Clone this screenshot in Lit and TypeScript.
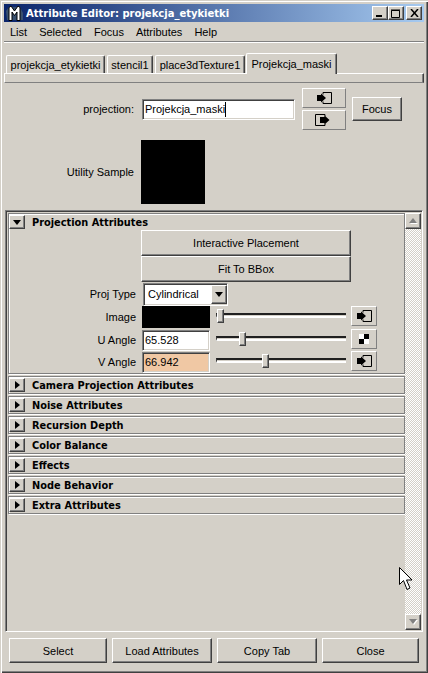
import { LitElement, html, css, svg } from "lit";
import { customElement } from "lit/decorators.js";

const inIcon = svg`<svg class="ico" width="15" height="12" viewBox="0 0 15 12"><path d="M6 .5H14.500V11.500H6V9.500M6 .5V2.500" fill="none" stroke="#000"/><path d="M0 3H4V1.500L9 6L4 10.500V9H0Z" fill="#000"/></svg>`;
const outIcon = svg`<svg class="ico" width="18" height="12" viewBox="0 0 18 12"><path d="M10 .5H.5V11.500H10V9.500M10 .5V2.500" fill="none" stroke="#000"/><path d="M5 3H9.500V1.500L14.500 6L9.500 10.500V9H5Z" fill="#000"/></svg>`;
const checker = svg`<svg class="ico" width="10" height="10" viewBox="0 0 10 10"><rect width="10" height="10" fill="#fff"/><path d="M5 0H10V5H5ZM0 5H5V10H0Z" fill="#000"/></svg>`;
const logo = svg`<svg width="17" height="17" viewBox="0 0 17 17"><path d="M0 6L3 2H14L17 8V15H1Z" fill="#39506e"/><path d="M3 15.500V2.500L5 1L8.500 6L12 1L14 2.500V15.500H11V7L8.500 10.500L6 7V15.500Z" fill="#fff" stroke="#000"/></svg>`;
const triDown = svg`<svg width="8" height="5" viewBox="0 0 8 5"><path d="M0 0H8L4 5Z" fill="#000"/></svg>`;
const triRight = svg`<svg width="5" height="8" viewBox="0 0 5 8"><path d="M0 0L5 4L0 8Z" fill="#000"/></svg>`;

@customElement("app-root")
export class AppRoot extends LitElement {
  static styles = css`
    :host { display: block; width: 428px; height: 673px; font-family: "Liberation Sans", Arial, sans-serif; font-size: 11px; color: #000; }
    * { box-sizing: border-box; }
    .window { position: relative; width: 428px; height: 673px; background: #d4d0c8; padding: 4px 4px 2px; display: flex; flex-direction: column;
      box-shadow: inset 1px 1px 0 #d4d0c8, inset 2px 2px 0 #fff, inset -1px -1px 0 #404040, inset -2px -2px 0 #808080; }
    .title { height: 18px; flex: none; display: flex; align-items: center; background: linear-gradient(90deg, #0a246a, #a6caf0); padding: 0 2px; color: #fff; font: bold 10px "DejaVu Sans", sans-serif; }
    .logo { width: 17px; height: 17px; margin-right: 3px; flex: none; }
    .caption { flex: 1; white-space: nowrap; }
    .caps { display: flex; }
    .cap { width: 16px; height: 14px; background: #d4d0c8; border: 1px solid; border-color: #fff #404040 #404040 #fff; box-shadow: inset -1px -1px 0 #808080; display: flex; align-items: center; justify-content: center; }
    .cap.x { margin-left: 2px; }
    .menu { height: 19px; flex: none; display: flex; align-items: center; gap: 12px; padding: 0 6px; }
    .sep { height: 2px; flex: none; border-top: 1px solid #808080; border-bottom: 1px solid #fff; margin-bottom: 10px; }
    .tabs { height: 20px; flex: none; display: flex; align-items: flex-end; padding-left: 2px; gap: 2px; position: relative; z-index: 1; }
    .tab { height: 18px; padding: 1px 0 0; display: flex; align-items: center; justify-content: center; border: 1px solid; border-color: #fff #404040 transparent #fff; border-bottom: 0; border-radius: 2px 2px 0 0; box-shadow: inset -1px 0 0 #808080; }
    .tab.on { height: 21px; margin-bottom: -1px; background: #d4d0c8; margin-left: -1px; padding-bottom: 2px; }
    .strip { height: 10px; flex: none; border: 1px solid; border-color: #fff #404040 #404040 #fff; border-bottom-color: #808080; box-shadow: inset -1px 0 0 #808080; margin-bottom: 4px; }
    .top { height: 123px; flex: none; display: flex; flex-direction: column; gap: 9px; }
    .lab { text-align: right; white-space: nowrap; }
    .proj { display: flex; align-items: center; height: 44px; }
    .proj .lab { width: 130px; }
    .field { background: #fff; border: 1px solid; border-color: #808080 #fff #fff #808080; box-shadow: inset 1px 1px 0 #404040, inset -1px -1px 0 #d4d0c8; padding: 0 2px; height: 21px; display: flex; align-items: center; white-space: nowrap; }
    .nodename { width: 153px; margin-left: 8px; }
    .caret { display: inline-block; width: 1px; height: 15px; background: #000; }
    .stack { display: flex; flex-direction: column; gap: 2px; margin-left: 7px; }
    .btn { background: #d4d0c8; border: 1px solid; border-color: #fff #404040 #404040 #fff; box-shadow: inset -1px -1px 0 #808080; display: flex; align-items: center; justify-content: center; white-space: nowrap; padding: 0; }
    .stack .btn { width: 44px; height: 20px; border-color: #fff #808080 #808080 #fff; box-shadow: none; }
    .focus { width: 50px; height: 24px; margin-left: 6px; }
    .util { display: flex; align-items: center; height: 64px; }
    .util .lab { width: 130px; }
    .swatch { width: 64px; height: 64px; background: #000; margin-left: 7px; }
    .frame { flex: 1; display: flex; border: 1px solid; border-color: #808080 #fff #fff #808080; box-shadow: inset 1px 1px 0 #404040; margin: 0 1px 6px 1px; padding: 2px 1px 0 2px; min-height: 0; }
    .sections { width: 397px; flex: none; display: flex; flex-direction: column; gap: 2px; }
    .sec { border: 1px solid #808080; box-shadow: 1px 1px 0 #fff, inset 1px 1px 0 #fff; }
    .head { height: 16px; display: flex; align-items: center; font: bold 9.800px "DejaVu Sans", sans-serif; white-space: nowrap; }
    .tri { width: 16px; height: 14px; margin-right: 7px; flex: none; }
    .sec.open { height: 161px; }
    .acts { margin-left: 132px; width: 210px; display: flex; flex-direction: column; }
    .acts .btn { height: 26px; }
    .row { display: flex; align-items: center; height: 22px; }
    .row .lab { width: 127px; }
    .row.ddrow { height: 24px; }
    .row.first { height: 23px; padding-top: 1px; }
    .dd { margin-left: 7px; width: 85px; height: 23px; padding: 0 0 0 4px; justify-content: space-between; }
    .dd .btn { width: 16px; height: 19px; }
    .sw { width: 68px; height: 22px; background: #000; margin-left: 6px; flex: none; }
    .num { width: 68px; height: 21px; margin-left: 6px; padding: 0 2px; flex: none; }
    .num.key { background: #f0c8a4; }
    .slider { position: relative; width: 130px; height: 5px; margin: 0 0 3px 6px; border-top: 2px solid #202020; border-left: 1px solid #404040; border-bottom: 2px solid #fff; flex: none; }
    .thumb { position: absolute; top: -6px; width: 7px; height: 14px; background: #d4d0c8; border: 1px solid; border-color: #fff #404040 #404040 #fff; box-shadow: inset -1px -1px 0 #808080; }
    .link { width: 26px; height: 20px; margin: 0 0 3px 5px; border-color: #fff #808080 #808080 #fff; box-shadow: none; flex: none; }
    .rbar { width: 16px; flex: none; display: flex; flex-direction: column;
      background-color: #fff; background-image: linear-gradient(45deg, #d4d0c8 25%, transparent 25%, transparent 75%, #d4d0c8 75%), linear-gradient(45deg, #d4d0c8 25%, transparent 25%, transparent 75%, #d4d0c8 75%); background-size: 2px 2px; background-position: 0 0, 1px 1px; justify-content: space-between; margin-bottom: 1px; }
    .rbar .btn { height: 16px; }
    .bottom { height: 25px; flex: none; display: grid; grid-template-columns: 98px 100px 100px 97px; justify-content: space-between; margin: 0 5px 8px; }
    .cursor { position: absolute; left: 399px; top: 567px; }
  `;

  render() {
    const closed = ["Camera Projection Attributes", "Noise Attributes", "Recursion Depth", "Color Balance", "Effects", "Node Behavior", "Extra Attributes"];
    return html`
      <div class="window">
        <div class="title">
          <span class="logo">${logo}</span>
          <span class="caption">Attribute Editor: projekcja_etykietki</span>
          <span class="caps">
            <span class="cap">${svg`<svg width="10" height="8" viewBox="0 0 10 8"><path d="M1 6H7V8H1Z" fill="#000"/></svg>`}</span>
            <span class="cap">${svg`<svg width="10" height="9" viewBox="0 0 10 9"><path d="M.5 1.500H8.500V8.500H.5ZM0 1H9" fill="none" stroke="#000"/></svg>`}</span>
            <span class="cap x">${svg`<svg width="9" height="8" viewBox="0 0 9 8"><path d="M1 0L8 8M8 0L1 8" stroke="#000" stroke-width="1.500"/></svg>`}</span>
          </span>
        </div>
        <div class="menu"><span>List</span><span>Selected</span><span>Focus</span><span>Attributes</span><span>Help</span></div>
        <div class="sep"></div>
        <div class="tabs">
          <div class="tab" style="width:99px">projekcja_etykietki</div>
          <div class="tab" style="width:46px">stencil1</div>
          <div class="tab" style="width:90px">place3dTexture1</div>
          <div class="tab on" style="width:91px">Projekcja_maski</div>
        </div>
        <div class="strip"></div>
        <div class="top">
          <div class="proj">
            <span class="lab">projection:</span>
            <span class="field nodename">Projekcja_maski<i class="caret"></i></span>
            <span class="stack"><span class="btn">${inIcon}</span><span class="btn">${outIcon}</span></span>
            <span class="btn focus">Focus</span>
          </div>
          <div class="util"><span class="lab">Utility Sample</span><span class="swatch"></span></div>
        </div>
        <div class="frame">
          <div class="sections">
            <div class="sec open">
              <div class="head"><span class="btn tri">${triDown}</span>Projection Attributes</div>
              <div class="acts">
                <span class="btn">Interactive Placement</span>
                <span class="btn">Fit To BBox</span>
              </div>
              <div class="row first"><span class="lab">Proj Type</span><span class="field dd">Cylindrical<span class="btn">${triDown}</span></span></div>
              <div class="row ddrow"><span class="lab">Image</span><span class="sw"></span><span class="slider"><span class="thumb" style="left:0"></span></span><span class="btn link">${inIcon}</span></div>
              <div class="row"><span class="lab">U Angle</span><span class="field num">65.528</span><span class="slider"><span class="thumb" style="left:22px"></span></span><span class="btn link">${checker}</span></div>
              <div class="row"><span class="lab">V Angle</span><span class="field num key">66.942</span><span class="slider"><span class="thumb" style="left:45px"></span></span><span class="btn link">${inIcon}</span></div>
            </div>
            ${closed.map((n) => html`<div class="sec"><div class="head"><span class="btn tri">${triRight}</span>${n}</div></div>`)}
          </div>
          <div class="rbar">
            <span class="btn">${svg`<svg width="9" height="6" viewBox="0 0 9 6"><path d="M1 6H9L5 2Z" fill="#fff"/><path d="M0 5H8L4 0Z" fill="#808080"/></svg>`}</span>
            <span class="btn">${svg`<svg width="9" height="6" viewBox="0 0 9 6"><path d="M1 1H9L5 6Z" fill="#fff"/><path d="M0 0H8L4 5Z" fill="#808080"/></svg>`}</span>
          </div>
        </div>
        <div class="bottom">
          <span class="btn">Select</span><span class="btn">Load Attributes</span><span class="btn">Copy Tab</span><span class="btn">Close</span>
        </div>
        <svg class="cursor" width="14" height="24" viewBox="0 0 14 24"><path d="M.5 .5V17.500L4.500 13.500L8 22.500L11 21L7.500 13H13Z" fill="#fff" stroke="#000"/></svg>
      </div>
    `;
  }
}
